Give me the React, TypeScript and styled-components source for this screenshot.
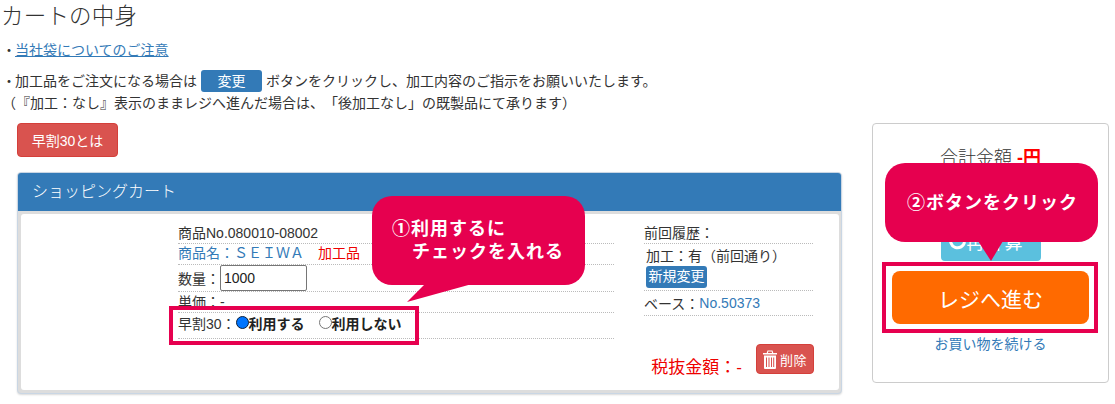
import React from 'react';
import styled, { createGlobalStyle } from 'styled-components';

const GlobalStyle = createGlobalStyle`
  html, body {
    margin: 0;
    padding: 0;
    background: #fff;
  }
  body {
    width: 1115px;
    height: 404px;
    overflow: hidden;
    font-family: "Liberation Sans", "Noto Sans CJK JP", sans-serif;
    font-size: 14px;
    color: #333;
    text-spacing-trim: space-all;
  }
  * { box-sizing: border-box; }
`;

const Page = styled.div`
  position: relative;
  width: 1115px;
  height: 404px;
  overflow: hidden;
  padding: 6px 0 0 2px;
`;

const Title = styled.h1`
  margin: 0 0 0 -1px;
  font-size: 22.5px;
  font-weight: 300;
  line-height: 22px;
  letter-spacing: 0.2px;
`;

const Notes = styled.div`
  margin-top: 11px;
`;

const Note = styled.p<{ $gap?: number }>`
  margin: ${(p) => p.$gap ?? 0}px 0 0;
  line-height: 22px;
  height: 22px;
  white-space: nowrap;
  display: flex;
  align-items: center;
`;

const Dot = styled.span`
  display: inline-block;
  width: 13px;
  text-align: center;
`;

const NoteLink = styled.a`
  color: #337ab7;
  text-decoration: underline;
`;

const ChangeTag = styled.span`
  display: inline-block;
  width: 61px;
  height: 22px;
  margin: 0 4px;
  background: #337ab7;
  border-radius: 3px;
  color: #fff;
  text-align: center;
  line-height: 23px;
`;

const Columns = styled.div`
  display: flex;
  align-items: flex-start;
  margin: 9px 0 0 15px;
`;

const MainColumn = styled.div`
  width: 825px;
`;

const DangerButton = styled.button`
  display: block;
  width: 101px;
  height: 34px;
  padding: 0;
  border: 1px solid #d43f3a;
  border-radius: 4px;
  background: #d9534f;
  color: #fff;
  font: inherit;
`;

const Panel = styled.section`
  margin-top: 15px;
  height: 222px;
  border: 1px solid #c9d6e4;
  border-radius: 4px;
  overflow: hidden;
  background: #ddd;
  box-shadow: 0 1px 2px rgba(0, 0, 0, 0.15);
`;

const PanelHeading = styled.h2`
  margin: 0;
  height: 38px;
  padding-left: 14px;
  background: #337ab7;
  color: #fff;
  font-size: 16px;
  font-weight: 300;
  line-height: 37px;
`;

const PanelBody = styled.div`
  display: flex;
  height: 176px;
  margin: 3px 2px 0 3px;
  padding: 10px 26px 0 157px;
  background: #fff;
  border-radius: 3px;
`;

const ItemColumn = styled.div`
  width: 436px;
`;

const DetailColumn = styled.div`
  position: relative;
  flex: 1;
  margin-left: 30px;
`;

const Row = styled.div<{ $h: number; $lift?: number }>`
  display: flex;
  align-items: center;
  height: ${(p) => p.$h}px;
  padding-bottom: ${(p) => p.$lift ?? 0}px;
  border-bottom: 1px dotted #bbb;
  white-space: nowrap;
`;

const BlueText = styled.span`
  color: #337ab7;
`;

const Processed = styled.span`
  margin-left: 14px;
  color: #e00;
`;

const QtyInput = styled.input`
  width: 87px;
  height: 26px;
  padding: 0 3px;
  border: 1px solid #767676;
  border-radius: 2px;
  font: inherit;
  color: #222;
`;

const RadioLabel = styled.label`
  display: inline-flex;
  align-items: center;
  margin-right: 14px;
  font-weight: 700;
  color: #222;
`;

const Radio = styled.input.attrs({ type: 'radio' })`
  appearance: none;
  width: 13px;
  height: 13px;
  margin: 0 0 2px 0;
  border: 1px solid #767676;
  border-radius: 50%;
  background: #fff;
  &:checked {
    border: 1.5px solid #0b1f3a;
    background: #0075ff;
  }
`;

const StackRow = styled.div`
  height: 47px;
  border-bottom: 1px dotted #bbb;
  padding: 2px 0 0 2px;
  line-height: 20px;
`;

const NewTag = styled.span`
  display: block;
  width: 61px;
  height: 22px;
  background: #337ab7;
  border-radius: 3px;
  color: #fff;
  text-align: center;
  line-height: 21px;
`;

const AmountRow = styled.div`
  position: absolute;
  top: 120px;
  right: -1px;
  display: flex;
  align-items: flex-start;
`;

const TaxText = styled.span`
  margin: 12px 14px 0 0;
  font-size: 17px;
  line-height: 24px;
  color: #e00;
`;

const DeleteButton = styled.button`
  display: flex;
  align-items: center;
  justify-content: center;
  gap: 3px;
  width: 58px;
  height: 30px;
  padding: 0;
  border: 1px solid #d43f3a;
  border-radius: 4px;
  background: #d9534f;
  color: #fff;
  font: inherit;
  font-size: 13px;
  letter-spacing: 0.5px;
`;

const Side = styled.aside`
  display: flex;
  flex-direction: column;
  align-items: center;
  width: 237px;
  height: 260px;
  margin-left: 30px;
  padding-top: 21px;
  border: 1px solid #ccc;
  border-radius: 4px;
`;

const Total = styled.div`
  font-size: 18px;
  line-height: 26px;
  font-weight: 300;
`;

const TotalValue = styled.b`
  color: #f00;
  font-weight: 700;
`;

const RecalcButton = styled.button`
  display: flex;
  align-items: center;
  width: 100px;
  height: 36px;
  margin-top: 54px;
  padding: 0 0 4px 8px;
  border: none;
  border-radius: 4px;
  background: #5bc0de;
  color: #fff;
  font: inherit;
  font-size: 18px;
  letter-spacing: 1px;
`;

const CheckoutButton = styled.button`
  width: 197px;
  height: 53px;
  margin-top: 10px;
  padding: 0;
  border: none;
  border-radius: 8px;
  background: #ff6a00;
  color: #fff;
  font: inherit;
  font-size: 21px;
`;

const ContinueLink = styled.a`
  margin-top: 10px;
  line-height: 20px;
  color: #337ab7;
  text-decoration: none;
`;

const Callout = styled.div<{ $left: number; $top: number; $w: number; $h: number; $single?: boolean }>`
  position: absolute;
  left: ${(p) => p.$left}px;
  top: ${(p) => p.$top}px;
  width: ${(p) => p.$w}px;
  height: ${(p) => p.$h}px;
  display: flex;
  flex-direction: column;
  justify-content: center;
  padding-left: ${(p) => (p.$single ? 22 : 20)}px;
  padding-bottom: ${(p) => (p.$single ? 3 : 4)}px;
  background: #e6004f;
  border-radius: 20px;
  color: #fff;
  font-family: "Noto Sans CJK JP", sans-serif;
  font-size: 18px;
  font-weight: 700;
  letter-spacing: 1px;
  line-height: 23px;
  white-space: nowrap;
`;

const CalloutIndent = styled.span`
  padding-left: 20px;
`;

const Tail = styled.svg`
  position: absolute;
  overflow: visible;
`;

const Outline = styled.div<{ $left: number; $top: number; $w: number; $h: number }>`
  position: absolute;
  left: ${(p) => p.$left}px;
  top: ${(p) => p.$top}px;
  width: ${(p) => p.$w}px;
  height: ${(p) => p.$h}px;
  border: 4px solid #e6004f;
`;

const TrashIcon = () => (
  <svg width="14" height="19" viewBox="0 0 14 19" fill="#fff">
    <path d="M4.5 0.5h5l0.8 2.5H14v1.6H0V3h3.7zM5.3 1.5L4.9 3h4.2l-0.4-1.5z" fillRule="evenodd" />
    <path d="M1 5.5h12V18a1 1 0 0 1-1 1H2a1 1 0 0 1-1-1zM3 7.5v9.5h1V7.5zM5.5 7.5v9.5h1V7.5zM8 7.5v9.5h1V7.5zM10.2 7.5v9.5h1V7.5z" fillRule="evenodd" />
  </svg>
);

const RefreshIcon = () => (
  <svg width="18" height="18" viewBox="0 0 18 18" fill="none" stroke="#fff" strokeWidth="3">
    <path d="M15.5 10A7 7 0 1 1 13.5 3.8" />
    <path d="M17 1v6h-6z" fill="#fff" stroke="none" />
  </svg>
);

export default function App() {
  return (
    <Page>
      <GlobalStyle />
      <Title>カートの中身</Title>
      <Notes>
        <Note>
          <Dot>・</Dot>
          <NoteLink href="#">当社袋についてのご注意</NoteLink>
        </Note>
        <Note $gap={9}>
          <Dot>・</Dot>
          加工品をご注文になる場合は<ChangeTag>変更</ChangeTag>ボタンをクリックし、加工内容のご指示をお願いいたします。
        </Note>
        <Note>（『加工：なし』表示のままレジへ進んだ場合は、「後加工なし」の既製品にて承ります）</Note>
      </Notes>
      <Columns>
        <MainColumn>
          <DangerButton>早割30とは</DangerButton>
          <Panel>
            <PanelHeading>ショッピングカート</PanelHeading>
            <PanelBody>
              <ItemColumn>
                <Row $h={20} $lift={4}>商品No.080010-08002</Row>
                <Row $h={21} $lift={4}>
                  <BlueText>商品名：ＳＥＩＷＡ</BlueText>
                  <Processed>加工品</Processed>
                </Row>
                <Row $h={27}>
                  数量：
                  <QtyInput defaultValue="1000" />
                </Row>
                <Row $h={21} $lift={2}>単価：-</Row>
                <Row $h={26} $lift={5}>
                  早割30：
                  <RadioLabel>
                    <Radio name="early" defaultChecked />
                    利用する
                  </RadioLabel>
                  <RadioLabel>
                    <Radio name="early" />
                    利用しない
                  </RadioLabel>
                </Row>
              </ItemColumn>
              <DetailColumn>
                <Row $h={20} $lift={4}>前回履歴：</Row>
                <StackRow>
                  加工：有（前回通り）
                  <NewTag>新規変更</NewTag>
                </StackRow>
                <Row $h={25}>
                  ベース：<BlueText>No.50373</BlueText>
                </Row>
                <AmountRow>
                  <TaxText>税抜金額：-</TaxText>
                  <DeleteButton>
                    <TrashIcon />
                    削除
                  </DeleteButton>
                </AmountRow>
              </DetailColumn>
            </PanelBody>
          </Panel>
        </MainColumn>
        <Side>
          <Total>
            合計金額 <TotalValue>-円</TotalValue>
          </Total>
          <RecalcButton>
            <RefreshIcon />
            再計算
          </RecalcButton>
          <CheckoutButton>レジへ進む</CheckoutButton>
          <ContinueLink href="#">お買い物を続ける</ContinueLink>
        </Side>
      </Columns>

      <Outline $left={169} $top={306} $w={250} $h={39} />
      <Callout $left={372} $top={196} $w={213} $h={89}>
        <span>①利用するに</span>
        <CalloutIndent>チェックを入れる</CalloutIndent>
      </Callout>
      <Tail style={{ left: 407, top: 284 }} width="66" height="19">
        <path d="M18 0L0 18L65 0z" fill="#e6004f" />
      </Tail>

      <Outline $left={882} $top={262} $w={216} $h={71} />
      <Callout $left={885} $top={163} $w={213} $h={79} $single>
        <span>②ボタンをクリック</span>
      </Callout>
      <Tail style={{ left: 978, top: 241 }} width="26" height="20">
        <path d="M0 0L13 20L25 0z" fill="#e6004f" />
      </Tail>
    </Page>
  );
}
